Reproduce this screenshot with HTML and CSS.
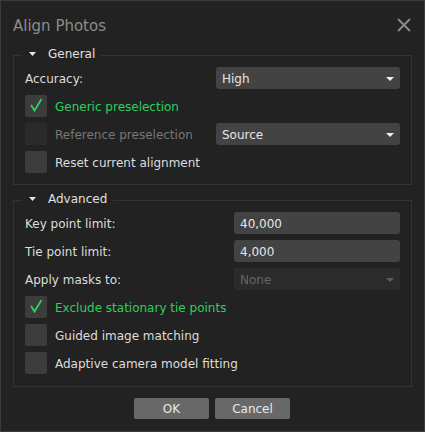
FILE: index.html
```html
<!DOCTYPE html>
<html>
<head>
<meta charset="utf-8">
<link rel="stylesheet" href="styles.css">
</head>
<body>
<div class="dialog">
  <div class="titlebar">
    <span class="title">Align Photos</span>
    <svg class="close" width="14" height="14" viewBox="0 0 14 14"><path d="M1 1 L13 13 M13 1 L1 13" stroke="#8a8a8a" stroke-width="2" fill="none"/></svg>
  </div>

  <section class="group group-general">
    <div class="group-title"><svg class="caret" width="7" height="4" viewBox="0 0 7 4"><polygon points="0,0 7,0 3.5,4" fill="#e6e6e6"/></svg>General</div>
    <div class="row">
      <span class="label">Accuracy:</span>
      <div class="select wide"><span class="val">High</span><svg class="arrow" width="8" height="4" viewBox="0 0 8 4"><polygon points="0,0 8,0 4,4" fill="#eeeeee"/></svg></div>
    </div>
    <div class="row">
      <label class="check checked"><span class="box"><svg width="22" height="22" viewBox="0 0 22 22"><path d="M6 10 L9.5 15.5 L16.5 4" stroke="#2fd160" stroke-width="1.8" fill="none"/></svg></span><span class="check-label">Generic preselection</span></label>
    </div>
    <div class="row">
      <label class="check disabled"><span class="box"></span><span class="check-label">Reference preselection</span></label>
      <div class="select wide"><span class="val">Source</span><svg class="arrow" width="8" height="4" viewBox="0 0 8 4"><polygon points="0,0 8,0 4,4" fill="#eeeeee"/></svg></div>
    </div>
    <div class="row">
      <label class="check"><span class="box"></span><span class="check-label">Reset current alignment</span></label>
    </div>
  </section>

  <section class="group group-advanced">
    <div class="group-title"><svg class="caret" width="7" height="4" viewBox="0 0 7 4"><polygon points="0,0 7,0 3.5,4" fill="#e6e6e6"/></svg>Advanced</div>
    <div class="row">
      <span class="label">Key point limit:</span>
      <div class="input"><span class="val">40,000</span></div>
    </div>
    <div class="row">
      <span class="label">Tie point limit:</span>
      <div class="input"><span class="val">4,000</span></div>
    </div>
    <div class="row">
      <span class="label">Apply masks to:</span>
      <div class="select narrow disabled"><span class="val">None</span><svg class="arrow" width="8" height="4" viewBox="0 0 8 4"><polygon points="0,0 8,0 4,4" fill="#5e5e5e"/></svg></div>
    </div>
    <div class="row">
      <label class="check checked"><span class="box"><svg width="22" height="22" viewBox="0 0 22 22"><path d="M6 10 L9.5 15.5 L16.5 4" stroke="#2fd160" stroke-width="1.8" fill="none"/></svg></span><span class="check-label">Exclude stationary tie points</span></label>
    </div>
    <div class="row">
      <label class="check"><span class="box"></span><span class="check-label">Guided image matching</span></label>
    </div>
    <div class="row">
      <label class="check"><span class="box"></span><span class="check-label">Adaptive camera model fitting</span></label>
    </div>
  </section>

  <div class="buttons">
    <button class="btn">OK</button>
    <button class="btn">Cancel</button>
  </div>
</div>
</body>
</html>
```

FILE: styles.css
```css
html, body {
  margin: 0;
  padding: 0;
  background: #222222;
}

.dialog {
  width: 425px;
  height: 432px;
  box-sizing: border-box;
  border: 1px solid #3b3b3b;
  background: #222222;
  padding: 0 12px;
  font-family: "DejaVu Sans", sans-serif;
  font-size: 12px;
  line-height: 14px;
  color: #dddddd;
  display: flex;
  flex-direction: column;
}

.titlebar {
  height: 54px;
  box-sizing: border-box;
  padding-top: 16px;
  display: flex;
  justify-content: space-between;
  align-items: flex-start;
}

.title {
  font-size: 15px;
  line-height: 18px;
  color: #8c8c8c;
}

.close {
  margin-top: 1px;
  margin-right: 1px;
}

.group {
  border: 1px solid #333333;
  padding: 0 11px 11px 11px;
  display: flex;
  flex-direction: column;
  gap: 6px;
}

.group-advanced {
  margin-top: 15px;
  padding-bottom: 12px;
}

.group-title {
  align-self: flex-start;
  margin-top: -9px;
  margin-left: -3px;
  padding: 0 6px 0 7px;
  background: #222222;
  display: flex;
  align-items: center;
  color: #e0e0e0;
}

.caret {
  margin-right: 12px;
  margin-top: -1px;
}

.row {
  height: 22px;
  display: flex;
  align-items: center;
  justify-content: space-between;
}

.label, .check-label, .val {
  padding-top: 2px;
}

.label {
  color: #dddddd;
}

.select, .input {
  height: 22px;
  box-sizing: border-box;
  background: #434343;
  border-radius: 3px;
  display: flex;
  align-items: center;
  justify-content: space-between;
  padding: 0 6px 0 6px;
  color: #e6e6e6;
}

.select.wide {
  width: 184px;
}

.select.narrow, .input {
  width: 166px;
}

.select.disabled {
  background: #2b2b2b;
  color: #666666;
}

.arrow {
  margin-top: 1px;
}

.check {
  display: flex;
  align-items: center;
  gap: 8px;
}

.box {
  width: 22px;
  height: 22px;
  border-radius: 2px;
  background: #3c3c3c;
  display: block;
}

.box svg {
  display: block;
}

.check.checked .check-label {
  color: #2fcf5f;
}

.check.disabled .box {
  background: #2a2a2a;
}

.check.disabled .check-label {
  color: #777777;
}

.buttons {
  margin-top: 11px;
  display: flex;
  justify-content: center;
  gap: 6px;
  padding-right: 1px;
}

.btn {
  width: 75px;
  height: 21px;
  border: none;
  border-radius: 2px;
  background: #686868;
  color: #e8e8e8;
  font-family: "DejaVu Sans", sans-serif;
  font-size: 12px;
  padding: 0;
}
```
